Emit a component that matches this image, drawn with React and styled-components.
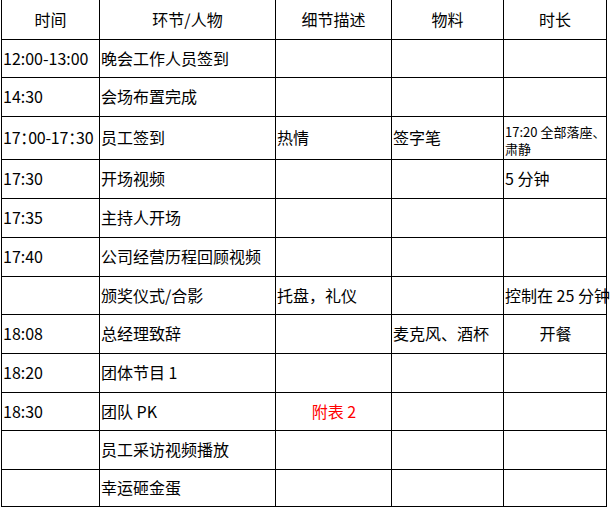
import React from 'react'
import styled, { createGlobalStyle } from 'styled-components'

const GlobalStyle = createGlobalStyle`
  html, body {
    margin: 0;
    padding: 0;
    background: #fff;
  }
  body {
    font-family: "Noto Sans CJK SC", "Noto Sans", sans-serif;
    color: #000;
  }
`

const headers = ['时间', '环节/人物', '细节描述', '物料', '时长']

// each row: [time, item, detail, material, duration]
const rows = [
  ['12:00-13:00', '晚会工作人员签到', '', '', ''],
  ['14:30', '会场布置完成', '', '', ''],
  [{ text: '17：00-17：30', narrow: true }, '员工签到', '热情', '签字笔', { text: '17:20 全部落座、肃静', compact: true }],
  ['17:30', '开场视频', '', '', '5 分钟'],
  ['17:35', '主持人开场', '', '', ''],
  ['17:40', '公司经营历程回顾视频', '', '', ''],
  ['', '颁奖仪式/合影', '托盘，礼仪', '', '控制在 25 分钟'],
  ['18:08', '总经理致辞', '', '麦克风、酒杯', { text: '开餐', align: 'center' }],
  ['18:20', '团体节目 1', '', '', ''],
  ['18:30', '团队 PK', { text: '附表 2', align: 'center', tone: 'red' }, '', ''],
  ['', '员工采访视频播放', '', '', ''],
  ['', '幸运砸金蛋', '', '', ''],
]

function App() {
  return (
    <>
      <GlobalStyle />
      <Sheet>
        {headers.map(h => (
          <HeadCell key={h}>{h}</HeadCell>
        ))}
        {rows.map((row, r) =>
          row.map((cell, c) => {
            const info = typeof cell === 'string' ? { text: cell } : cell
            return (
              <Cell
                key={r + '-' + c}
                $align={info.align}
                $tone={info.tone}
                $compact={info.compact}
                $narrow={info.narrow}
              >
                {info.text}
              </Cell>
            )
          })
        )}
      </Sheet>
    </>
  )
}

export default App

const Sheet = styled.div`
  display: grid;
  grid-template-columns: 98px 176px 116px 112px 103px;
  grid-template-rows: 40px 38px 39px 43px 39px 39px 39px 38px 39px 39px 38px 39px 37px;
  margin-left: 1px;
  width: max-content;
  border-left: 1px solid #000;
`

const Cell = styled.div`
  box-sizing: border-box;
  display: flex;
  align-items: center;
  justify-content: ${p => (p.$align === 'center' ? 'center' : 'flex-start')};
  padding: ${p => (p.$compact ? '3px 0 0 1px' : '0 0 2px 1px')};
  border-right: 1px solid #000;
  border-bottom: 1px solid #000;
  font-size: ${p => (p.$compact ? '13px' : '16px')};
  line-height: ${p => (p.$compact ? '17px' : '20px')};
  color: ${p => (p.$tone === 'red' ? '#f00' : '#000')};
  white-space: ${p => (p.$compact ? 'normal' : 'nowrap')};
  font-feature-settings: ${p => (p.$narrow ? '"halt" 1' : 'normal')};
  letter-spacing: ${p => (p.$narrow ? '-0.2px' : '0')};
  overflow: visible;
`

const HeadCell = styled(Cell)`
  justify-content: center;
  padding: 0 0 2px;
`
